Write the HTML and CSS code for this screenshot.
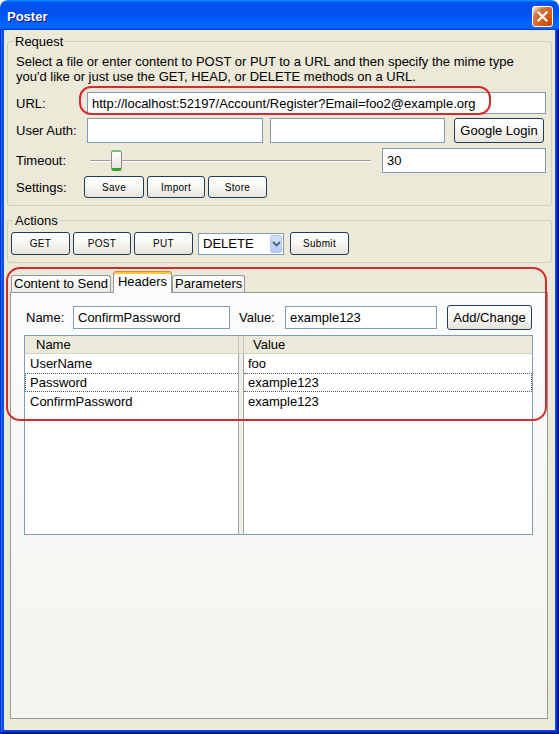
FILE: index.html
```html
<!DOCTYPE html>
<html lang="en">
<head>
    <meta charset="UTF-8">
    <meta name="viewport" content="width=device-width, initial-scale=1.0">
    <title>Poster</title>
    <link rel="stylesheet" href="styles.css">
</head>
<body>

<div class="window">
    <div class="titlebar">
        <span class="title">Poster</span>
        <button class="close-btn" aria-label="Close">
            <svg width="13" height="13" viewBox="0 0 13 13"><path d="M2.5 2.5 L10.5 10.5 M10.5 2.5 L2.5 10.5" stroke="#fff" stroke-width="2.2" stroke-linecap="square"/></svg>
        </button>
    </div>

    <div class="frame">
        <div class="client">

            <fieldset class="group request">
                <legend>Request</legend>
                <div class="group-body">
                    <p class="hint">Select a file or enter content to POST or PUT to a URL and then specify the mime type<br>you'd like or just use the GET, HEAD, or DELETE methods on a URL.</p>

                    <div class="row row-url">
                        <span class="row-label">URL:</span>
                        <input class="field field-url" type="text" value="http://localhost:52197/Account/Register?Email=foo2@example.org">
                    </div>
                    <div class="row row-auth">
                        <span class="row-label">User Auth:</span>
                        <input class="field field-user" type="text">
                        <input class="field field-pass" type="text">
                        <button class="btn btn-google">Google Login</button>
                    </div>
                    <div class="row row-timeout">
                        <span class="row-label">Timeout:</span>
                        <div class="slider"><span class="slider-thumb"></span></div>
                        <input class="field field-timeout" type="text" value="30">
                    </div>
                    <div class="row row-settings">
                        <span class="row-label">Settings:</span>
                        <div class="btn-group">
                            <button class="btn btn-small btn-save">Save</button>
                            <button class="btn btn-small btn-import">Import</button>
                            <button class="btn btn-small btn-store">Store</button>
                        </div>
                    </div>
                </div>
            </fieldset>

            <fieldset class="group actions">
                <legend>Actions</legend>
                <div class="group-body">
                    <button class="btn btn-small btn-get">GET</button>
                    <button class="btn btn-small btn-post">POST</button>
                    <button class="btn btn-small btn-put">PUT</button>
                    <div class="combo">
                        <span class="combo-text">DELETE</span>
                        <span class="combo-arrow">
                            <svg width="9" height="6" viewBox="0 0 9 6"><path d="M1 1 L4.5 4.5 L8 1" fill="none" stroke="#4d6185" stroke-width="1.8"/></svg>
                        </span>
                    </div>
                    <button class="btn btn-small btn-submit">Submit</button>
                </div>
            </fieldset>

            <div class="tabpane">
                <div class="tabs">
                    <span class="tab tab-first">Content to Send</span>
                    <span class="tab tab-active">Headers</span>
                    <span class="tab">Parameters</span>
                </div>
                <div class="panel">
                    <div class="kv-row">
                        <span class="kv-label">Name:</span>
                        <input class="field field-name" type="text" value="ConfirmPassword">
                        <span class="kv-label kv-label-value">Value:</span>
                        <input class="field field-value" type="text" value="example123">
                        <button class="btn btn-add">Add/Change</button>
                    </div>

                    <div class="table">
                        <div class="th th-name">Name</div>
                        <div class="th th-sep"></div>
                        <div class="th th-value">Value</div>
                        <div class="divider"></div>

                        <div class="td">UserName</div>
                        <div class="td td-value">foo</div>
                        <div class="td td-focus">Password</div>
                        <div class="td td-value td-focus-end">example123</div>
                        <div class="td">ConfirmPassword</div>
                        <div class="td td-value">example123</div>
                    </div>
                </div>
            </div>

        </div>
    </div>

    <div class="annot annot-url"></div>
    <div class="annot annot-tabs"></div>
</div>

</body>
</html>
```

FILE: styles.css
```css
* {
    box-sizing: border-box;
}
body {
    margin: 0;
    font-family: "Liberation Sans", Arial, sans-serif;
    font-size: 13px;
    color: #000;
    background: #fff;
}
.window {
    position: relative;
    width: 559px;
    height: 734px;
    display: flex;
    flex-direction: column;
}
.titlebar {
    height: 30px;
    flex: none;
    display: flex;
    align-items: flex-start;
    justify-content: space-between;
    padding: 0 6px 0 7px;
    border-radius: 8px 8px 0 0;
    background: linear-gradient(180deg, #0997ff, #0053ee 8%, #0050ee 40%, #0066ff 88%, #0066ff 93%, #005bff 95%, #003dd7 96%, #003dd7);
}
.title {
    margin-top: 9px;
    line-height: 15px;
    color: #fff;
    font-weight: bold;
    font-size: 13px;
    text-shadow: 1px 1px #0f1089;
}
.close-btn {
    margin-top: 6px;
    width: 21px;
    height: 21px;
    padding: 0;
    border: 1px solid #fff;
    border-radius: 3px;
    background: radial-gradient(circle at 90% 90%, #cc4600 0%, #dc6527 55%, #cd7546 70%, #ffccb2 90%, #fff 100%);
    display: flex;
    align-items: center;
    justify-content: center;
}
.frame {
    flex: 1;
    display: flex;
    padding: 0 4px 4px;
    background: #0a4be0;
    box-shadow: inset -1px -1px #00138c, inset 1px 0 #0831d9, inset -2px -2px #001ea0, inset 2px 0 #166aee, inset -3px -3px #003bda, inset 3px 0 #0855dd;
}
.client {
    flex: 1;
    display: flex;
    flex-direction: column;
    padding-top: 4px;
    background: #ece9d8;
}

/* group boxes */
.group {
    margin: 0 3px;
    padding: 0;
    min-width: 0;
    border: 1px solid #d0d0bf;
    border-radius: 3px;
}
.group legend {
    margin-left: 5px;
    padding: 0 2px;
    line-height: 15px;
}
.request .group-body {
    padding: 5px 5px 7px 8px;
}
.hint {
    margin: 0;
    line-height: 15px;
    white-space: nowrap;
}
.row {
    display: flex;
    align-items: center;
}
.row-label {
    width: 71px;
    flex: none;
}
.row-url {
    margin-top: 8px;
    height: 22px;
}
.row-auth {
    margin-top: 4px;
    height: 25px;
}
.row-timeout {
    margin-top: 5px;
    height: 25px;
}
.row-settings {
    margin-top: 3px;
    height: 22px;
}

.field {
    height: 22px;
    padding: 0 4px;
    border: 1px solid #7f9db9;
    background: #fff;
    font: inherit;
    color: #000;
    outline: none;
}
.field-url {
    width: 459px;
}
.field-user {
    width: 176px;
    height: 25px;
}
.field-pass {
    width: 175px;
    height: 25px;
    margin-left: 7px;
}
.field-timeout {
    width: 164px;
    height: 25px;
    margin-left: 11px;
}

.btn {
    padding: 0;
    font: inherit;
    color: #000;
    border: 1px solid #1c3c62;
    border-radius: 3px;
    background: linear-gradient(#ffffff 0%, #f6f5f1 55%, #e6e3d9 100%);
}
.btn-small {
    height: 23px;
    font-size: 10px;
    letter-spacing: 0.3px;
}
.btn-google {
    width: 90px;
    height: 25px;
    margin-left: 9px;
}
.btn-group {
    display: flex;
    gap: 3px;
    margin-left: -3px;
}
.btn-group .btn-small {
    height: 22px;
}
.btn-save {
    width: 60px;
}
.btn-import {
    width: 58px;
}
.btn-store {
    width: 59px;
}

.slider {
    width: 281px;
    height: 25px;
    margin-left: 3px;
    display: flex;
    align-items: center;
    background:
        linear-gradient(#9d9d9d, #9d9d9d) 0 12px / 100% 1px no-repeat,
        linear-gradient(#fff, #fff) 0 13px / 100% 1px no-repeat;
}
.slider-thumb {
    width: 11px;
    height: 21px;
    margin-left: 21px;
    border: 1px solid #8c8b84;
    border-top: 2px solid #6fc26f;
    border-bottom: 3px solid #2ea42e;
    border-radius: 3px;
    background: linear-gradient(#ffffff, #e6e5de);
}

.actions {
    margin-top: 7px;
}
.actions .group-body {
    display: flex;
    align-items: center;
    padding: 4px 3px 7px;
}
.btn-get {
    width: 59px;
}
.btn-post {
    width: 58px;
    margin-left: 3px;
}
.btn-put {
    width: 59px;
    margin-left: 3px;
}
.btn-submit {
    width: 59px;
}
.combo {
    width: 86px;
    height: 22px;
    margin: 0 6px 0 5px;
    display: flex;
    border: 1px solid #7f9db9;
    background: #fff;
}
.combo-text {
    flex: 1;
    padding-left: 4px;
    line-height: 20px;
}
.combo-arrow {
    width: 12px;
    margin: 1px;
    display: flex;
    align-items: center;
    justify-content: center;
    border: 1px solid #b7c9f2;
    border-radius: 2px;
    background: linear-gradient(#d5e1fc, #b6caf6);
}

/* tabs */
.tabpane {
    flex: 1;
    display: flex;
    flex-direction: column;
    margin: 8px 7px 11px 6px;
}
.tabs {
    position: relative;
    z-index: 1;
    height: 21px;
    display: flex;
    align-items: flex-end;
    padding-left: 1px;
}
.tab {
    height: 17px;
    padding: 0 2px;
    line-height: 16px;
    white-space: nowrap;
    border: 1px solid #919b9c;
    border-bottom: 0;
    border-radius: 3px 3px 0 0;
    background: linear-gradient(#ffffff, #ecebe5);
}
.tab-first {
    margin-right: 2px;
}
.tab-active {
    height: 22px;
    margin-bottom: -1px;
    padding: 2px 4px 0;
    line-height: 15px;
    border-top-color: #e68b2c;
    box-shadow: inset 0 2px #ffc83c;
    background: #fcfcfe;
}
.panel {
    flex: 1;
    display: flex;
    flex-direction: column;
    padding: 12px 14px 0 15px;
    border: 1px solid #919b9c;
    background: linear-gradient(#fcfcfe, #f4f3ee);
}
.kv-row {
    display: flex;
    align-items: center;
    height: 25px;
}
.kv-label {
    width: 47px;
    flex: none;
}
.kv-label-value {
    width: 46px;
    margin-left: 9px;
}
.field-name {
    width: 157px;
    height: 23px;
}
.field-value {
    width: 152px;
    height: 23px;
}
.btn-add {
    width: 85px;
    height: 25px;
    margin-left: 10px;
}

.table {
    width: 509px;
    height: 200px;
    margin: 5px 0 0 -2px;
    display: grid;
    grid-template-columns: 213px 6px 1fr;
    grid-template-rows: 18px 19px 19px 19px 1fr;
    border: 1px solid #7f9db9;
    background: #fff;
}
.th {
    line-height: 18px;
    background: #ebeadb;
    box-shadow: inset 0 -1px #d6d2c2;
}
.th-name {
    padding-left: 11px;
}
.th-sep {
    border-left: 1px solid #c9c6b6;
    border-right: 1px solid #c9c6b6;
}
.th-value {
    padding-left: 9px;
}
.divider {
    grid-column: 2;
    grid-row: 2 / -1;
    border-left: 1px solid #a5a49e;
    border-right: 1px solid #a5a49e;
    background: #f1f0ea;
}
.td {
    padding-left: 5px;
    line-height: 19px;
    white-space: nowrap;
}
.td-value {
    padding-left: 4px;
}
.td-focus {
    line-height: 17px;
    padding-left: 4px;
    border: 1px dotted #5a5a5a;
    border-right: 0;
}
.td-focus-end {
    line-height: 17px;
    padding-left: 4px;
    border: 1px dotted #5a5a5a;
    border-left: 0;
}

/* red highlight marks drawn over the window */
.annot {
    position: absolute;
    border: 2px solid #d62b2e;
    pointer-events: none;
}
.annot-url {
    left: 79px;
    top: 86px;
    width: 412px;
    height: 29px;
    border-radius: 12px;
}
.annot-tabs {
    left: 6px;
    top: 267px;
    width: 541px;
    height: 154px;
    border-radius: 14px;
}
```
